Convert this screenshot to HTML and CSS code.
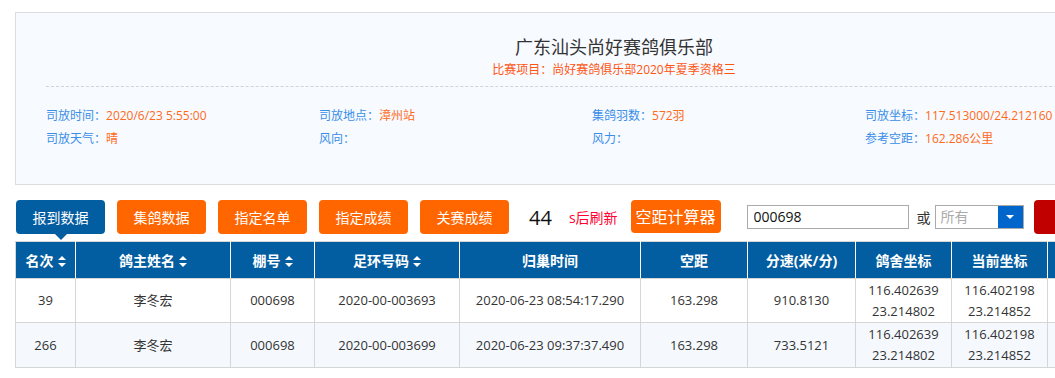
FILE: index.html
```html
<!DOCTYPE html>
<html lang="zh-CN">
<head>
  <meta charset="UTF-8">
  <meta name="viewport" content="width=device-width, initial-scale=1.0">
  <title>比赛成绩</title>
  <link rel="stylesheet" href="styles.css">
</head>
<body>
  <div class="page">
    <div class="race-info">
      <h1 class="club-name">广东汕头尚好赛鸽俱乐部</h1>
      <p class="race-name">比赛项目：尚好赛鸽俱乐部2020年夏季资格三</p>
      <div class="info-grid">
        <div class="info-item"><span class="label">司放时间：</span><span class="value">2020/6/23 5:55:00</span></div>
        <div class="info-item"><span class="label">司放地点：</span><span class="value">漳州站</span></div>
        <div class="info-item"><span class="label">集鸽羽数：</span><span class="value">572羽</span></div>
        <div class="info-item"><span class="label">司放坐标：</span><span class="value">117.513000/24.212160</span></div>
        <div class="info-item"><span class="label">司放天气：</span><span class="value">晴</span></div>
        <div class="info-item"><span class="label">风向：</span><span class="value"></span></div>
        <div class="info-item"><span class="label">风力：</span><span class="value"></span></div>
        <div class="info-item"><span class="label">参考空距：</span><span class="value">162.286公里</span></div>
      </div>
    </div>

    <div class="toolbar">
      <button class="tab-btn active">报到数据</button>
      <button class="tab-btn">集鸽数据</button>
      <button class="tab-btn">指定名单</button>
      <button class="tab-btn">指定成绩</button>
      <button class="tab-btn">关赛成绩</button>
      <span class="countdown">44</span>
      <span class="refresh-tip">s后刷新</span>
      <button class="calc-btn">空距计算器</button>
      <input class="search-input" type="text" value="000698">
      <span class="or-text">或</span>
      <div class="select-box">
        <span class="select-text">所有</span>
        <span class="select-arrow"></span>
      </div>
      <button class="search-btn" aria-label="查询"></button>
    </div>

    <table class="result-table">
      <colgroup>
        <col style="width:60px">
        <col style="width:155px">
        <col style="width:84px">
        <col style="width:145px">
        <col style="width:181px">
        <col style="width:107px">
        <col style="width:108px">
        <col style="width:96px">
        <col style="width:96px">
        <col style="width:100px">
      </colgroup>
      <thead>
        <tr>
          <th>名次<i class="sort"></i></th>
          <th>鸽主姓名<i class="sort"></i></th>
          <th>棚号<i class="sort"></i></th>
          <th>足环号码<i class="sort"></i></th>
          <th>归巢时间</th>
          <th>空距</th>
          <th>分速(米/分)</th>
          <th>鸽舍坐标</th>
          <th>当前坐标</th>
          <th></th>
        </tr>
      </thead>
      <tbody>
        <tr>
          <td>39</td>
          <td>李冬宏</td>
          <td>000698</td>
          <td>2020-00-003693</td>
          <td>2020-06-23 08:54:17.290</td>
          <td>163.298</td>
          <td>910.8130</td>
          <td>116.402639<br>23.214802</td>
          <td>116.402198<br>23.214852</td>
          <td></td>
        </tr>
        <tr>
          <td>266</td>
          <td>李冬宏</td>
          <td>000698</td>
          <td>2020-00-003699</td>
          <td>2020-06-23 09:37:37.490</td>
          <td>163.298</td>
          <td>733.5121</td>
          <td>116.402639<br>23.214802</td>
          <td>116.402198<br>23.214852</td>
          <td></td>
        </tr>
      </tbody>
    </table>
  </div>
</body>
</html>
```

FILE: styles.css
```css
html,
body {
  overflow: hidden;
}

body {
  margin: 0;
  padding: 12px 0 0 15px;
  font-family: "Open Sans", "Noto Sans CJK SC", sans-serif;
  color: #333;
  background: #fff;
}

.page {
  width: 1300px;
}

/* race header card */
.race-info {
  width: 1136px;
  padding: 22px 30px 34px;
  background: #f7faff;
  border: 1px solid #dcdcdc;
}

.club-name {
  margin: 0;
  font-size: 18px;
  line-height: 24px;
  font-weight: normal;
  text-align: center;
  color: #333;
}

.race-name {
  margin: 1px 0 0;
  padding-bottom: 6px;
  font-size: 12px;
  line-height: 20px;
  text-align: center;
  color: #ff5511;
  border-bottom: 1px dashed #d0d4d8;
}

.info-grid {
  display: grid;
  grid-template-columns: repeat(4, 273px);
  padding-top: 17px;
}

.info-item {
  font-size: 12px;
  line-height: 23px;
  white-space: nowrap;
}

.label {
  color: #3a8ee8;
}

.value {
  color: #ff6a1a;
}

/* toolbar */
.toolbar {
  display: flex;
  align-items: center;
  height: 34px;
  margin-top: 15px;
}

.tab-btn {
  position: relative;
  width: 89px;
  height: 34px;
  margin-left: 12px;
  padding: 0;
  border: none;
  border-radius: 4px;
  background: #ff6600;
  color: #fff;
  font-family: inherit;
  font-size: 14px;
  cursor: pointer;
}

.tab-btn:first-child {
  margin-left: 1px;
}

.tab-btn.active {
  background: #035da1;
}

.tab-btn.active::after {
  content: "";
  position: absolute;
  left: 50%;
  bottom: -6px;
  margin-left: -6px;
  border-left: 6px solid transparent;
  border-right: 6px solid transparent;
  border-top: 6px solid #035da1;
}

.countdown {
  margin-left: 20px;
  font-size: 20px;
  color: #111;
}

.refresh-tip {
  margin-left: 17px;
  font-size: 14px;
  color: #ff0033;
}

.calc-btn {
  height: 33px;
  margin: -2px 0 0 13px;
  padding: 0 5px;
  border: none;
  border-radius: 4px;
  background: #ff6600;
  color: #fff;
  font-family: inherit;
  font-size: 16px;
}

.search-input {
  box-sizing: border-box;
  width: 162px;
  height: 24px;
  margin: -1px 0 0 26px;
  padding: 0 6px;
  border: 1px solid #aaa;
  font-family: inherit;
  font-size: 14px;
  color: #111;
  outline: none;
}

.or-text {
  margin-left: 8px;
  font-size: 14px;
  color: #333;
}

.select-box {
  box-sizing: border-box;
  display: flex;
  width: 89px;
  height: 24px;
  margin: -1px 0 0 4px;
  border: 1px solid #aaa;
}

.select-text {
  flex: 1;
  padding-left: 5px;
  font-size: 14px;
  line-height: 22px;
  color: #aaa;
}

.select-arrow {
  position: relative;
  width: 25px;
  background: #0066cc;
}

.select-arrow::after {
  content: "";
  position: absolute;
  left: 8px;
  top: 9px;
  border-left: 4px solid transparent;
  border-right: 4px solid transparent;
  border-top: 4px solid #fff;
}

.search-btn {
  width: 60px;
  height: 34px;
  margin-left: 10px;
  border: none;
  border-radius: 4px;
  background: #c00000;
}

/* results table */
.result-table {
  margin-top: 7px;
  table-layout: fixed;
  width: 1132px;
  border-collapse: collapse;
  border: 1px solid #d6d6d6;
  font-size: 13px;
}

.result-table th {
  height: 36px;
  padding: 0;
  background: #035da1;
  color: #fff;
  font-size: 14px;
  font-weight: bold;
  border: 1px solid #d6d6d6;
  border-top: none;
  border-left-color: #fff;
  border-right-color: #fff;
  white-space: nowrap;
}

.result-table th:first-child {
  border-left-color: #d6d6d6;
}

.sort {
  display: inline-block;
  position: relative;
  width: 8px;
  height: 11px;
  margin-left: 4px;
  vertical-align: -1px;
}

.sort::before,
.sort::after {
  content: "";
  position: absolute;
  left: 0;
  border-left: 4px solid transparent;
  border-right: 4px solid transparent;
}

.sort::before {
  top: 0;
  border-bottom: 4px solid #fff;
}

.sort::after {
  bottom: 0;
  border-top: 4px solid #fff;
}

.result-table td {
  height: 43px;
  padding: 0;
  text-align: center;
  line-height: 21px;
  color: #333;
  border: 1px solid #d6d6d6;
}

.result-table tbody tr:nth-child(2) td {
  height: 44px;
  background: #f5f9fe;
}
```
